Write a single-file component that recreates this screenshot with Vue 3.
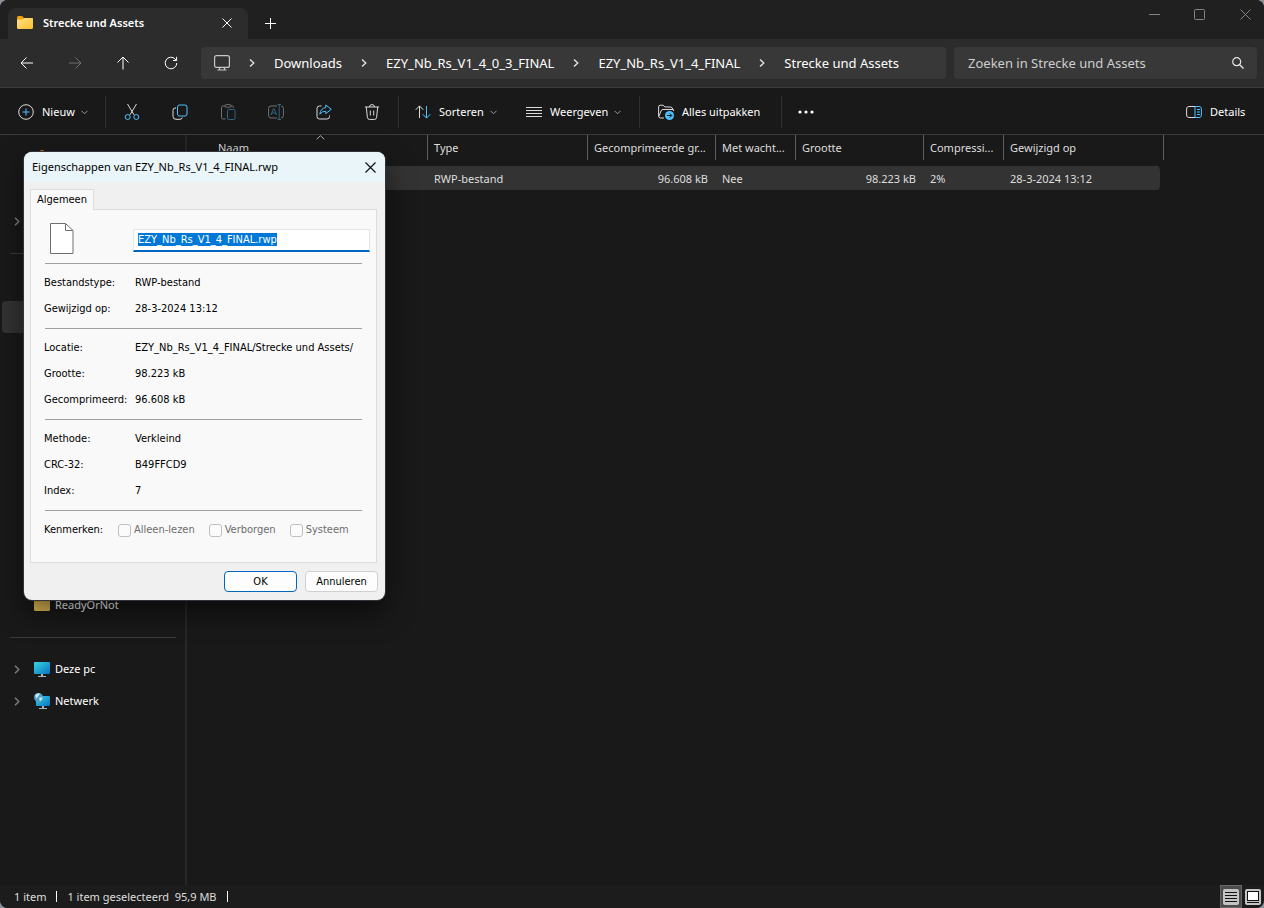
<script setup>
import { ref, onMounted } from 'vue'

const crumbs = ['Downloads', 'EZY_Nb_Rs_V1_4_0_3_FINAL', 'EZY_Nb_Rs_V1_4_FINAL', 'Strecke und Assets']

const columns = [
  { key: 'name', label: 'Naam', sorted: true },
  { key: 'type', label: 'Type' },
  { key: 'packed', label: 'Gecomprimeerde gr...', numeric: true },
  { key: 'password', label: 'Met wacht...' },
  { key: 'size', label: 'Grootte', numeric: true },
  { key: 'ratio', label: 'Compressi...' },
  { key: 'modified', label: 'Gewijzigd op' }
]
const file = {
  name: '',
  type: 'RWP-bestand',
  packed: '96.608 kB',
  password: 'Nee',
  size: '98.223 kB',
  ratio: '2%',
  modified: '28-3-2024 13:12'
}

const places = [
  { icon: 'home' },
  {},
  { expandable: true },
  { divider: true },
  {},
  { selected: true },
  {}, {}, {}, {}, {}, {}, {}, {},
  { icon: 'folder', label: 'ReadyOrNot' },
  { divider: true },
  { icon: 'pc', label: 'Deze pc', expandable: true },
  { icon: 'network', label: 'Netwerk', expandable: true }
]

const details = [
  [['Bestandstype:', 'RWP-bestand'], ['Gewijzigd op:', '28-3-2024 13:12']],
  [['Locatie:', 'EZY_Nb_Rs_V1_4_FINAL/Strecke und Assets/'], ['Grootte:', '98.223 kB'], ['Gecomprimeerd:', '96.608 kB']],
  [['Methode:', 'Verkleind'], ['CRC-32:', 'B49FFCD9'], ['Index:', '7']]
]
const attributes = ['Alleen-lezen', 'Verborgen', 'Systeem']

const fileName = ref('EZY_Nb_Rs_V1_4_FINAL.rwp')
const nameInput = ref(null)
onMounted(() => {
  nameInput.value.focus()
  nameInput.value.select()
})
</script>

<template>
  <div class="desktop">
    <div class="window">
      <header class="titlebar">
        <div class="tab">
          <svg class="i16" viewBox="0 0 16 16"><path d="M0 2.500Q0 1 1.500 1H5l2 2h7.500Q16 3 16 4.500V8H0z" fill="#f0a30a" /><path d="M0 5.500Q0 4.500 1 4.500h4.500L7.500 3H15q1 0 1 1v8.500q0 1.500-1.500 1.500h-13Q0 14 0 12.500z" fill="url(#tabfold)" /><defs><linearGradient id="tabfold" x1="0" y1="0" x2="1" y2="1"><stop stop-color="#ffe08a" /><stop offset="1" stop-color="#fbc02d" /></linearGradient></defs></svg>
          <span class="tab-title">Strecke und Assets</span>
          <button class="tab-close" aria-label="Tabblad sluiten"><svg width="10" height="10" viewBox="0 0 10 10"><path d="M.5.5l9 9M9.500.5l-9 9" stroke="#fff" fill="none" /></svg></button>
        </div>
        <button class="new-tab" aria-label="Nieuw tabblad"><svg width="11" height="11" viewBox="0 0 11 11"><path d="M5.500 0v11M0 5.500h11" stroke="#fff" /></svg></button>
        <div class="caption">
          <button aria-label="Minimaliseren"><svg width="11" height="11" viewBox="0 0 11 11"><path d="M0 5.500h11" stroke="#848484" /></svg></button>
          <button aria-label="Maximaliseren"><svg width="11" height="11" viewBox="0 0 11 11"><rect x=".5" y=".5" width="10" height="10" rx="1" fill="none" stroke="#848484" /></svg></button>
          <button aria-label="Sluiten"><svg width="11" height="11" viewBox="0 0 11 11"><path d="M.5.5l10 10M10.500.5l-10 10" stroke="#848484" /></svg></button>
        </div>
      </header>

      <nav class="navbar">
        <button aria-label="Vorige"><svg width="14" height="14" viewBox="0 0 14 14"><path d="M13 7H1.500M6.500 1.500L1 7l5.500 5.500" /></svg></button>
        <button aria-label="Volgende" class="dim"><svg width="14" height="14" viewBox="0 0 14 14"><path d="M1 7h11.500M7.500 1.500L13 7l-5.500 5.500" /></svg></button>
        <button aria-label="Omhoog"><svg width="14" height="14" viewBox="0 0 14 14"><path d="M7 13.500V1.500M1.500 6.500L7 1l5.500 5.500" /></svg></button>
        <button aria-label="Vernieuwen"><svg width="14" height="14" viewBox="0 0 14 14"><path d="M12.800 7A5.800 5.800 0 1 1 11.200 3L12.500 4.400M12.600 .8V4.500H9" /></svg></button>
        <div class="address">
          <svg class="pc-outline" width="16" height="16" viewBox="0 0 16 16"><rect x=".6" y=".6" width="14.800" height="11.800" rx="2" fill="#333" stroke="#c8c8c8" stroke-width="1.200" /><path d="M5.500 12.500v2M10.500 12.500v2M3.500 15h9" stroke="#c8c8c8" stroke-width="1.200" /></svg>
          <template v-for="c in crumbs" :key="c">
            <svg class="sep-chev" width="6" height="8" viewBox="0 0 6 8"><path d="M1 .5L4.800 4 1 7.500" stroke="#e8e8e8" stroke-width="1.300" fill="none" /></svg>
            <a href="#">{{ c }}</a>
          </template>
        </div>
        <label class="search">
          <input type="text" placeholder="Zoeken in Strecke und Assets" aria-label="Zoeken in Strecke und Assets" />
          <svg width="12" height="12" viewBox="0 0 12 12"><circle cx="4.700" cy="4.700" r="4" fill="none" stroke="#e4e4e4" stroke-width="1.200" /><path d="M7.700 7.700L11.500 11.500" stroke="#e4e4e4" stroke-width="1.400" /></svg>
        </label>
      </nav>

      <div class="toolbar">
        <button class="cmd new">
          <svg class="i16" viewBox="0 0 16 16"><circle cx="8" cy="8" r="7.300" /><path d="M8 4.500v7M4.500 8h7" class="blue" /></svg>
          <span>Nieuw</span>
          <svg class="drop" width="7" height="5" viewBox="0 0 7 5"><path d="M.5 .8l3 3 3-3" /></svg>
        </button>
        <i class="rule"></i>
        <button class="tool" aria-label="Knippen"><svg class="i16" viewBox="0 0 16 16"><path d="M3.500 0L10 10.800M12.500 0L6 10.800" /><circle cx="3.700" cy="13" r="2.500" class="blue" /><circle cx="12.300" cy="13" r="2.500" class="blue" /></svg></button>
        <button class="tool" aria-label="Kopiëren"><svg class="i16" viewBox="0 0 16 16"><path d="M4 4H3Q1 4 1 6.500V12.500Q1 15.300 4 15.300H8Q10 15.300 10.300 13.500" /><rect x="5.500" y="1" width="9.500" height="11" rx="2" class="blue" /></svg></button>
        <button class="tool faded" aria-label="Plakken"><svg class="i16" viewBox="0 0 16 16"><path d="M5 2H3Q1.500 2 1.500 3.500V13.500Q1.500 15 3 15H5.500M11 2h1.500Q13.500 2 13.500 3.500V4" /><rect x="5" y=".6" width="6" height="2.600" rx="1.200" /><rect x="7.500" y="5.500" width="7.500" height="10" rx="1.200" class="blue" /></svg></button>
        <button class="tool faded" aria-label="Naam wijzigen"><svg class="i16" viewBox="0 0 16 16"><path d="M9 2H3Q.6 2 .6 4.500V11.500Q.6 14 3 14H9M13 2Q15.400 2 15.400 4.500V11.500Q15.400 14 13 14" /><path d="M3 11L5.600 4.500h.4L8.500 11M3.800 9h4M9.500 .5h3.500M9.500 15.500H13M11.200 .5v15" class="blue" /></svg></button>
        <button class="tool" aria-label="Delen"><svg class="i16" viewBox="0 0 16 16"><path d="M5.500 2H3.500Q1 2 1 4.500V12.500Q1 15 3.500 15H11Q13.500 15 13.500 12.500V11.500" /><path d="M9.800 1L15.300 5.300 9.800 9.600V7.200Q6 7 3.800 10.200 4.500 4.200 9.800 3.600z" class="blue" stroke-linejoin="round" /></svg></button>
        <button class="tool" aria-label="Verwijderen"><svg class="i16" viewBox="0 0 16 16"><path d="M.8 3h14.400M5.500 3Q5.500 .6 8 .6T10.500 3M2.300 3L3.400 13.500Q3.600 15.400 5.400 15.400H10.600Q12.400 15.400 12.600 13.500L13.700 3M6.300 6.500v5M9.700 6.500v5" /></svg></button>
        <i class="rule"></i>
        <button class="cmd sort">
          <svg class="i16" viewBox="0 0 16 16"><path d="M4.500 14V2M.7 5.800L4.500 1.900l3.800 3.900" /><path d="M11.500 2v12M7.700 10.200l3.800 3.900 3.800-3.900" class="blue" /></svg>
          <span>Sorteren</span>
          <svg class="drop" width="7" height="5" viewBox="0 0 7 5"><path d="M.5 .8l3 3 3-3" /></svg>
        </button>
        <button class="cmd view">
          <svg class="i16" viewBox="0 0 16 16"><path d="M0 3.500h16M0 6.500h16M0 9.500h16M0 12.500h16" /></svg>
          <span>Weergeven</span>
          <svg class="drop" width="7" height="5" viewBox="0 0 7 5"><path d="M.5 .8l3 3 3-3" /></svg>
        </button>
        <i class="rule"></i>
        <button class="cmd extract">
          <svg class="i16" viewBox="0 0 16 16"><path d="M6 14H2.500Q.6 14 .6 12V3Q.6 1.200 2.500 1.200H5L7 3h5.500Q14.500 3 14.500 5M1 12L3 7Q3.500 5.500 5 5.500H15.500V7" /><circle cx="11.500" cy="11.500" r="4.500" fill="#4cc2ff" stroke="none" /><path d="M9 11.500h4.500M11.800 9.500l2 2-2 2" stroke="#111" /></svg>
          <span>Alles uitpakken</span>
        </button>
        <i class="rule"></i>
        <button class="tool" aria-label="Meer weergeven"><svg class="i16" viewBox="0 0 16 16"><g fill="#fff" stroke="none"><circle cx="2" cy="8" r="1.600" /><circle cx="8" cy="8" r="1.600" /><circle cx="14" cy="8" r="1.600" /></g></svg></button>
        <button class="cmd details">
          <svg class="i16" viewBox="0 0 16 16"><path d="M9 2.500H3Q.6 2.500 .6 5V11Q.6 13.500 3 13.500H9" /><path d="M9 2.500H13Q15.400 2.500 15.400 5V11Q15.400 13.500 13 13.500H9zM11 5.500h3M11 8h3M11 10.500h3" class="blue" /></svg>
          <span>Details</span>
        </button>
      </div>

      <main class="main">
        <aside class="sidebar">
          <ul>
            <li v-for="(p, i) in places" :key="i" :class="{ divider: p.divider, selected: p.selected }">
              <svg v-if="p.expandable" class="expand" width="6" height="9" viewBox="0 0 6 9"><path d="M1 .7L4.800 4.500 1 8.300" stroke="#7c7c7c" stroke-width="1.500" fill="none" /></svg>
              <svg v-if="p.icon === 'home'" class="place-icon" viewBox="0 0 16 16"><path d="M6.500 1.500Q8 .5 9.500 1.500L15 7v8H1V7z" fill="#f08a10" /></svg>
              <svg v-if="p.icon === 'folder'" class="place-icon" viewBox="0 0 16 16"><path d="M0 2.500Q0 1 1.500 1H5l2 2h7.500Q16 3 16 4.500V8H0z" fill="#e0a020" /><path d="M0 5h5.500L7.500 3.500H16v9q0 1.500-1.500 1.500h-13Q0 14 0 12.500z" fill="#e6bd55" /></svg>
              <svg v-if="p.icon === 'pc'" class="place-icon" viewBox="0 0 16 16"><defs><linearGradient id="scr" x1="0" y1="0" x2="1" y2="1"><stop stop-color="#35d6e0" /><stop offset="1" stop-color="#0a6fc2" /></linearGradient></defs><rect y="1" width="16" height="12" rx="1" fill="url(#scr)" /><path d="M7 13h2v2h3v1H4v-1h3z" fill="#a9b4bd" /></svg>
              <svg v-if="p.icon === 'network'" class="place-icon" viewBox="0 0 16 16"><rect x="2" y="3" width="14" height="10" rx="1" fill="url(#scr)" /><path d="M8 13h2v2h3v1H5v-1h3z" fill="#a9b4bd" /><circle cx="4.500" cy="4.500" r="4.500" fill="#4f9fcc" /><path d="M1 2.500Q3 -.5 6 .5L4.500 3 2.500 5.500zM5 5l3-1 .5 2L6 8.500z" fill="#c9e4f2" /></svg>
              <a v-if="p.label" href="#">{{ p.label }}</a>
            </li>
          </ul>
        </aside>
        <section class="content">
          <table>
            <colgroup><col v-for="c in columns" :key="c.key" :class="'col-' + c.key" /></colgroup>
            <thead>
              <tr>
                <th v-for="c in columns" :key="c.key">
                  <div class="head">
                    <svg v-if="c.sorted" class="sort-mark" width="9" height="5" viewBox="0 0 9 5"><path d="M.7 4.300L4.500 .7l3.800 3.600" stroke="#b0b0b0" fill="none" /></svg>
                    {{ c.label }}
                  </div>
                </th>
              </tr>
            </thead>
            <tbody>
              <tr><td v-for="c in columns" :key="c.key" :class="{ numeric: c.numeric }">{{ file[c.key] }}</td></tr>
            </tbody>
          </table>
        </section>
      </main>

      <footer class="statusbar">
        <span class="count">1 item</span>
        <span class="chosen">1 item geselecteerd&nbsp; 95,9 MB</span>
        <div class="modes">
          <button class="active" aria-label="Details"><svg class="i16" viewBox="0 0 16 16"><rect width="16" height="16" rx="2" fill="#c4c4c4" /><path d="M2 3.500h12M2 6.500h12M2 9.500h12M2 12.500h12" stroke="#111" /></svg></button>
          <button aria-label="Miniaturen"><svg class="i16" viewBox="0 0 16 16"><rect width="16" height="16" rx="2" fill="#c4c4c4" /><rect x="2.500" y="2.500" width="11" height="9" fill="#fff" stroke="#111" /><path d="M2 13.500h12" stroke="#111" /></svg></button>
        </div>
      </footer>
    </div>

    <form class="dialog" role="dialog" aria-labelledby="dlg-title" @submit.prevent>
      <header class="dlg-title">
        <span id="dlg-title">Eigenschappen van EZY_Nb_Rs_V1_4_FINAL.rwp</span>
        <button type="button" aria-label="Sluiten"><svg width="11" height="11" viewBox="0 0 11 11"><path d="M.5.5l10 10M10.500.5l-10 10" stroke="#111" stroke-width="1.200" /></svg></button>
      </header>
      <div class="dlg-body">
        <button type="button" class="dlg-tab">Algemeen</button>
        <div class="panel">
          <div class="name-row">
            <svg width="24" height="31" viewBox="0 0 24 31"><path d="M.5.5h15l7.500 7v23H.5z" fill="#fff" stroke="#707070" /><path d="M15.500.5V7.500H23" fill="none" stroke="#707070" /></svg>
            <input ref="nameInput" v-model="fileName" type="text" aria-label="Bestandsnaam" spellcheck="false" />
          </div>
          <template v-for="(group, g) in details" :key="g">
            <hr />
            <dl><div v-for="row in group" :key="row[0]"><dt>{{ row[0] }}</dt><dd>{{ row[1] }}</dd></div></dl>
          </template>
          <hr />
          <div class="attrs">
            <span class="attrs-label">Kenmerken:</span>
            <label v-for="a in attributes" :key="a"><input type="checkbox" disabled />{{ a }}</label>
          </div>
        </div>
        <div class="actions">
          <button type="submit" class="default">OK</button>
          <button type="button">Annuleren</button>
        </div>
      </div>
    </form>
  </div>
</template>

<style>
html, body { margin: 0; background: #8a9097; }
</style>

<style scoped>
* { box-sizing: border-box; }
.desktop { position: relative; font-family: "Noto Sans", "Open Sans", sans-serif; font-size: 11px; line-height: 16px; color: #fff; }
button { font: inherit; color: inherit; background: none; border: 0; padding: 0; margin: 0; display: flex; align-items: center; justify-content: center; white-space: nowrap; }
svg { display: block; flex: none; }
a { color: inherit; text-decoration: none; white-space: nowrap; }
ul, dl, dd { margin: 0; padding: 0; list-style: none; }
.i16 { width: 16px; height: 16px; }

.window { display: flex; flex-direction: column; min-height: 100vh; background: #191919; border-radius: 8px; overflow: hidden; }

.titlebar { display: flex; height: 39px; background: #202020; padding-left: 8px; }
.tab { display: flex; align-items: center; width: 240px; margin-top: 8px; padding: 0 16px 1px 9px; gap: 10px; background: #2c2c2c; border-radius: 8px 8px 0 0; }
.tab-title { flex: 1; font-weight: 600; }
.new-tab { width: 44px; height: 46px; }
.caption { display: flex; margin-left: auto; }
.caption button { width: 45px; height: 29px; }
.caption button:last-child { width: 38px; margin-left: 4px; }

.navbar { display: flex; align-items: center; height: 49px; padding: 0 7px 0 3px; background: #2c2c2c; border-bottom: 1px solid #3b3b3b; }
.navbar > button { width: 48px; height: 32px; }
.navbar > button svg { fill: none; stroke: #fff; }
.navbar > .dim svg { stroke: #6f6f6f; }
.address { display: flex; align-items: center; flex: 732; margin-left: 6px; height: 32px; padding-left: 13px; background: #383838; border-radius: 4px; font-size: 13px; }
.sep-chev { margin: 0 19px; }
.search { display: flex; align-items: center; flex: 276; margin-left: 8px; height: 32px; padding: 0 13px 0 14px; background: #383838; border-radius: 4px; font-size: 13px; }
.search input { flex: 1; min-width: 0; padding: 0; border: 0; outline: 0; background: none; color: #fff; font: inherit; }
.search input::placeholder { color: #cfcfcf; opacity: 1; }

.toolbar { display: flex; align-items: center; height: 47px; padding: 2px 0 0 6px; border-bottom: 1px solid #3b3b3b; }
.toolbar svg { fill: none; stroke: #dcdcdc; }
.toolbar svg .blue { stroke: #4cc2ff; }
.toolbar svg.drop { stroke: #9a9a9a; margin-left: -2px; }
.cmd { justify-content: flex-start; height: 32px; padding: 0 12px; gap: 8px; }
.new { width: 92px; }
.sort { width: 111px; }
.view { width: 118px; }
.extract { width: 128px; }
.details { margin-left: auto; width: 90px; }
.tool { width: 48px; height: 32px; }
.faded svg { opacity: 0.450; }
.rule { flex: none; width: 1px; height: 32px; margin: 0 4px 0 2px; background: #2f2f2f; }
.new + .rule { margin: 0 2px 0 7px; }
.view + .rule { margin: 0 6px 0 7px; }
.extract + .rule { margin: 0 0 0 7px; }

.main { display: flex; flex: 1; }
.sidebar { width: 187px; padding-top: 6px; border-right: 2px solid #272727; }
.sidebar li { display: grid; grid-template-columns: 13px 16px 1fr; align-items: center; column-gap: 6px; height: 32px; margin-left: 2px; padding-left: 12px; }
.sidebar li.divider::before { content: ""; grid-column: 1 / 4; height: 1px; margin: 0 9px 0 -4px; background: #3a3a3a; }
.sidebar li.selected { background: #333; border-radius: 4px; margin-right: 12px; }
.expand { grid-column: 1; }
.place-icon { grid-column: 2; width: 16px; height: 16px; margin-left: 1px; }
.sidebar a { grid-column: 3; }
.sidebar li > * { grid-row: 1; }

.content { flex: 1; padding-left: 25px; color: #dedede; }
table { table-layout: fixed; width: 952px; border-collapse: separate; border-spacing: 0; }
.col-name { width: 216px; }
.col-type { width: 160px; }
.col-packed { width: 128px; }
.col-password { width: 80px; }
.col-size { width: 128px; }
.col-ratio { width: 80px; }
.col-modified { width: 160px; }
th { padding: 0 0 6px; font-weight: 400; text-align: left; }
.head { position: relative; height: 25px; padding: 5px 0 0 6px; border-right: 1px solid #5c5c5c; white-space: nowrap; overflow: hidden; }
.sort-mark { position: absolute; top: 0; left: calc(50% - 4px); }
td { height: 24px; padding: 1px 6px 0; background: #333; white-space: nowrap; }
td.numeric { text-align: right; padding-right: 8px; }
td:last-child { border-right: 4px solid transparent; background-clip: padding-box; border-radius: 0 6px 6px 0; }

.statusbar { display: flex; align-items: center; height: 23px; padding-left: 14px; background: #1c1c1c; color: #dedede; }
.statusbar span { display: flex; align-items: center; }
.statusbar span::after { content: ""; width: 1px; height: 11px; margin: 0 10px; background: #fff; }
.modes { display: flex; gap: 2px; margin-left: auto; padding-right: 2px; }
.modes button { width: 18px; height: 23px; }
.modes .active { width: 22px; background: #4d4d4d; border: 1px solid #666; }

.dialog { position: absolute; left: 24px; top: 152px; width: 361px; background: #f0f0f0; color: #000; border-radius: 8px; overflow: hidden; box-shadow: 0 0 0 1px #30343a, 0 12px 28px rgba(0, 0, 0, 0.550); font-family: "DejaVu Sans Condensed", "DejaVu Sans", sans-serif; }
.dlg-title { display: flex; justify-content: space-between; align-items: center; height: 30px; padding: 0 9px 0 8px; background: #eaf5f9; font-family: "Noto Sans", "Open Sans", sans-serif; }
.dlg-title button { height: 28px; }
.dlg-body { padding: 7px 8px 8px 6px; }
.dlg-tab { position: relative; z-index: 1; height: 21px; margin-bottom: -1px; padding: 0 6px; background: #f9f9f9; border: 1px solid #dcdcdc; border-bottom: 0; }
.panel { padding: 0 14px 19px; background: #f9f9f9; border: 1px solid #dcdcdc; }
.name-row { display: flex; align-items: flex-end; justify-content: space-between; height: 47px; margin: 0 -8px 0 0; padding: 0 0 3px 5px; }
.name-row input { width: 237px; height: 23px; margin-bottom: 2px; padding: 0 4px 2px; background: #fff; border: 1px solid #e6e6e6; border-bottom: 2px solid #0067c0; outline: 0; font: inherit; line-height: 14px; }
.name-row input::selection { background: #0078d7; color: #fff; }
hr { height: 1px; margin: 6px 0; border: 0; background: #a0a0a0; }
dl div { display: flex; align-items: center; height: 26px; }
dt { width: 91px; margin-left: -1px; }
dd { white-space: nowrap; }
.attrs { display: flex; align-items: center; height: 26px; margin-left: -1px; }
.attrs-label { flex: none; width: 74px; }
.attrs label { display: flex; flex: none; align-items: center; gap: 3px; margin-right: 14px; color: #6d6d6d; white-space: nowrap; }
.attrs input { appearance: none; width: 13px; height: 13px; margin: 0; border: 1px solid #c0c0c0; border-radius: 3px; background: #fbfbfb; }
.actions { display: flex; justify-content: flex-end; gap: 8px; margin: 8px -1px 0 0; }
.actions button { width: 73px; height: 21px; background: #fdfdfd; border: 1px solid #d0d0d0; border-radius: 4px; }
.actions .default { border-color: #0067c0; }
</style>
